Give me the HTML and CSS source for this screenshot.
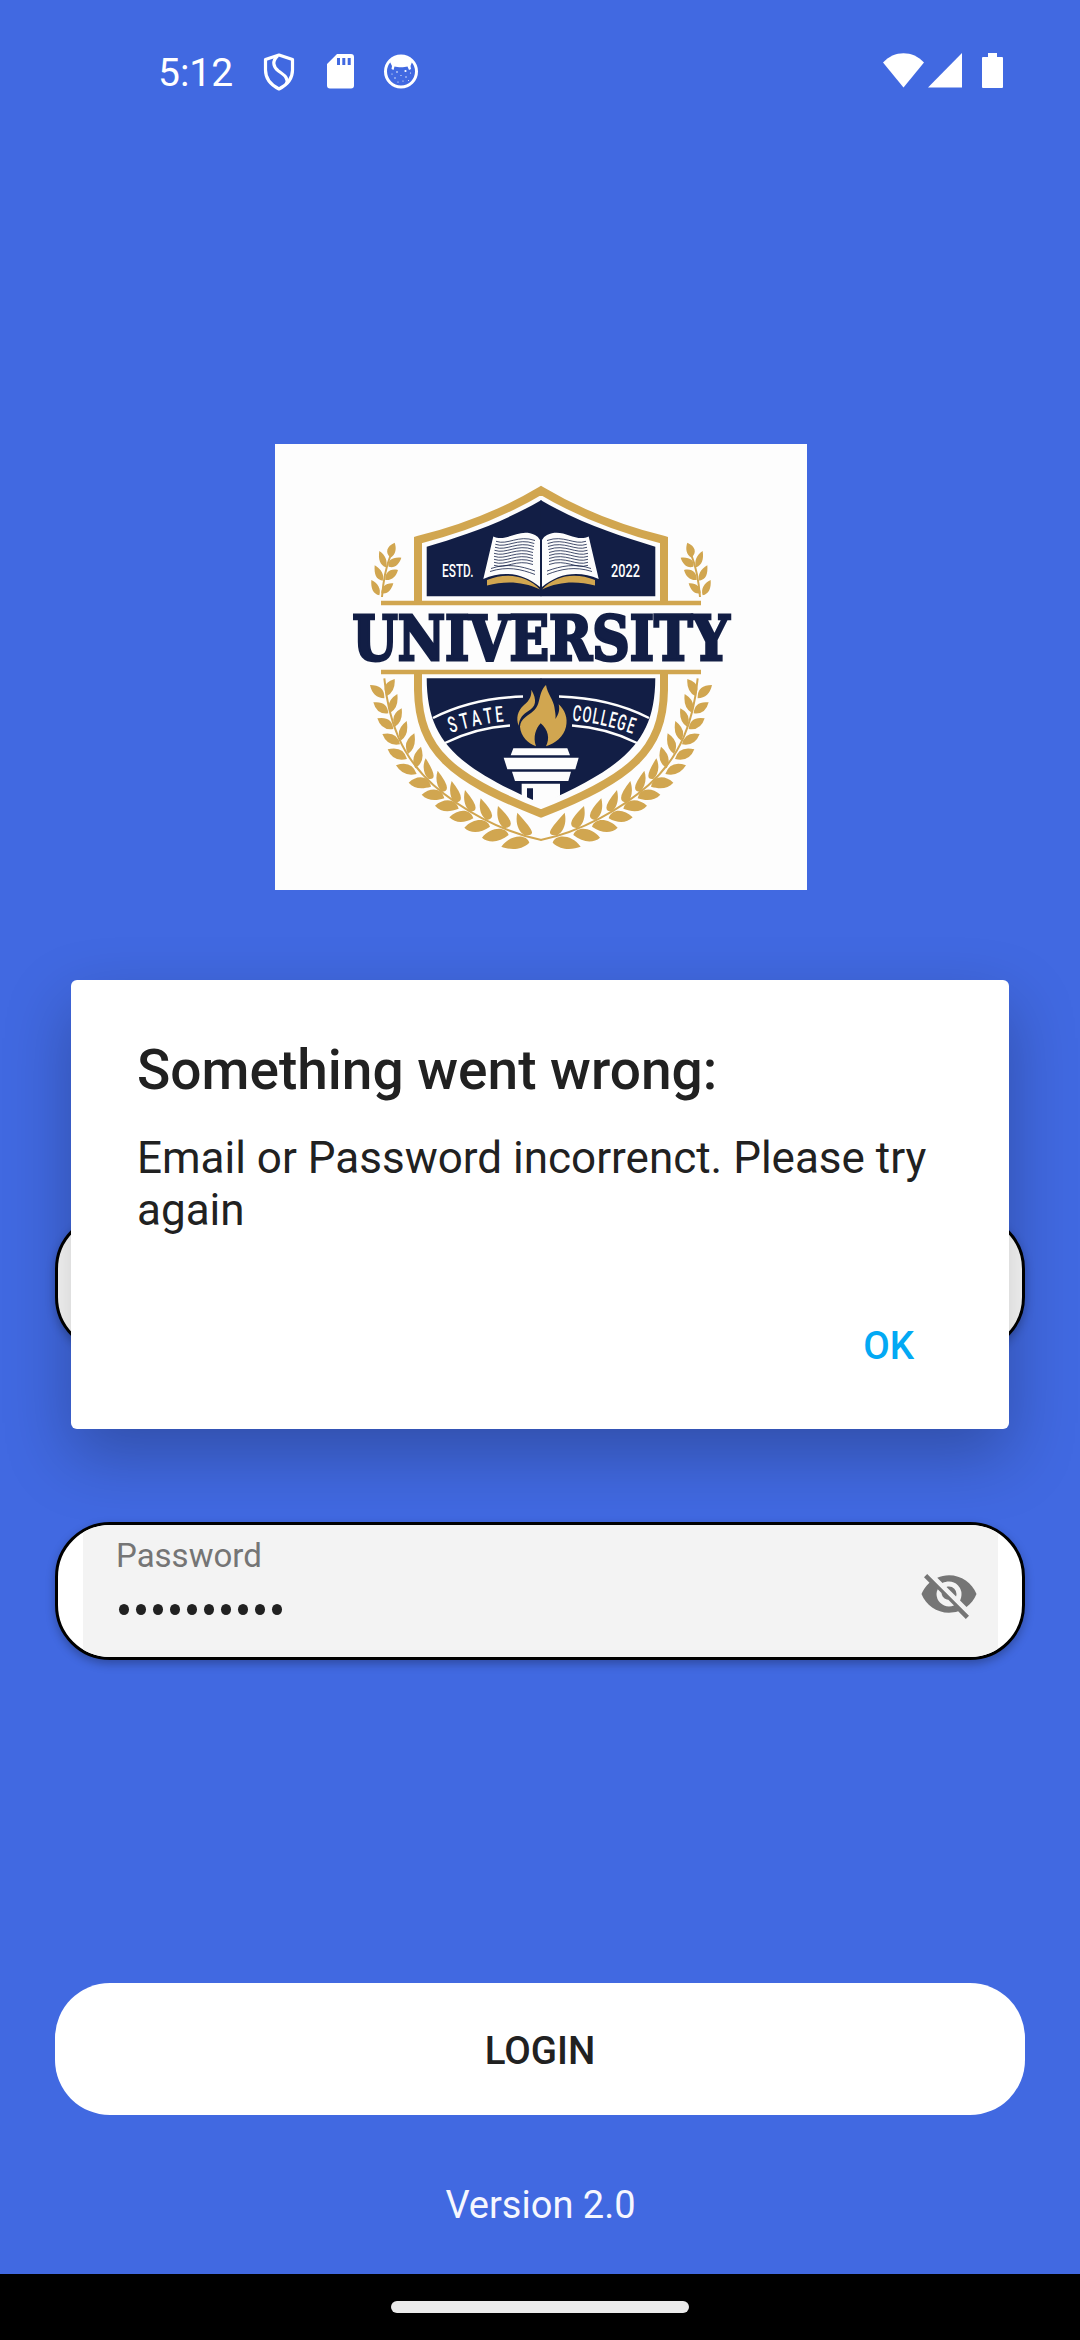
FILE: index.html
```html
<!DOCTYPE html>
<html lang="en">
<head>
<meta charset="utf-8">
<title>Login</title>
<link rel="stylesheet" href="styles.css">
</head>
<body>
<header class="status">
  <span class="clock">5:12</span>
  <svg class="ic-shield" width="32" height="38" viewBox="0 0 32 38" fill="none" stroke="#fff" stroke-width="3.2" stroke-linejoin="round"><path d="M16 2 L29.5 6.5 V17 C29.5 26 23 32.500 16 36 C9 32.500 2.500 26 2.500 17 V6.500Z"/><path d="M14.500 3 C9 8 10 14 15.500 18 C22 22.500 25.500 25 23.500 31"/></svg>
  <svg class="ic-card" width="27" height="35" viewBox="0 0 27 35"><path fill="#fff" fill-rule="evenodd" d="M10 0H24Q27 0 27 3V31.500Q27 34.500 24 34.500H3Q0 34.500 0 31.500V10ZM10 4V11H13V4ZM15.300 4V11H18.300V4ZM20.700 4V11H23.700V4Z"/></svg>
  <svg class="ic-face" width="34" height="35" viewBox="0 0 34 35"><circle cx="17" cy="17.500" r="15.500" fill="none" stroke="#fff" stroke-width="3"/><path fill="#fff" d="M6 8C11 1 23 1 28 8L26.500 12 27 15 25 16 23.500 12.500C20 13.500 14 13.500 10.500 12.500L9.500 16 7.500 15 8 12Z"/><g fill="#fff"><circle cx="13" cy="18" r=".8"/><circle cx="21.500" cy="17" r="1.100"/><circle cx="8" cy="20" r=".6"/><circle cx="17" cy="21.500" r=".6"/><circle cx="11" cy="24" r=".7"/><circle cx="22" cy="23" r=".7"/><circle cx="26.500" cy="19" r=".6"/><circle cx="14" cy="28" r=".6"/><circle cx="19" cy="27" r=".6"/><circle cx="24.500" cy="26.500" r=".5"/></g></svg>
  <span class="spacer"></span>
  <svg class="ic-wifi" width="41" height="35" viewBox="0 0 41 35"><path fill="#fff" d="M0 9.500C11-3 30-3 41 9.500L20.500 34.500Z"/></svg>
  <svg class="ic-signal" width="34" height="35" viewBox="0 0 34 35"><path fill="#fff" d="M34 0V34.500H0Z"/></svg>
  <svg class="ic-battery" width="21" height="35" viewBox="0 0 21 35"><path fill="#fff" d="M6 0H15V4H20Q21 4 21 5V34Q21 35 20 35H1Q0 35 0 34V5Q0 4 1 4H6Z"/></svg>
</header>

<main class="login">
  <svg class="logo" viewBox="275 444 532 446" width="532" height="446">
    <defs>
      <g id="half">
        <path class="navy" d="M541.500 500C500 524 462 536 426.700 546.700V596.300H541.500ZM541.500 678.300H426.700C427 740 455 766 541.500 804Z"/>
        <path class="white-line" d="M433 718C460 704 492 697.500 523 696.500M445 743C465 733 488 727 510 725.500"/>
        <!-- open book page -->
        <path class="white" d="M493.300 536.500C507 543 519 527 535 535Q539 537 540 540V587C524 573 503 570 483.300 579Z"/>
        <path class="gold" d="M487 580C506 572 527 575 540 589.500C522 581 505 581 487 585.500Z"/>
        <g class="page-lines">
          <path id="rule" d="M496 541.300C508 545.500 518 534.500 535 540.500"/>
          <use href="#rule" x="-.7" y="3"/><use href="#rule" x="-1" y="6"/><use href="#rule" x="-1.500" y="9"/><use href="#rule" x="-2" y="12"/><use href="#rule" x="-2" y="15"/><use href="#rule" y="18" x="-2"/><use href="#rule" y="21" x="-2"/><use href="#rule" y="24" x="-2"/>
          <path d="M491 568.500C507 563 521 566 535 571M490 571.500C507 566 521 569 535 574.500"/>
        </g>
        <g class="gold" transform="translate(270 440) scale(.33333)">
          <path d="M374 308C350 318 344 338 362 353C378 342 380 325 374 308ZM328 333C324 358 330 376 348 382C354 362 346 345 328 333ZM394 353C368 350 350 362 356 380C374 386 388 372 394 353ZM314 376C312 402 318 420 338 422C344 404 334 388 314 376ZM384 390C360 384 344 398 346 420C366 422 378 410 384 390ZM304 420C302 446 310 462 328 466C334 446 324 430 304 420ZM370 430C348 428 334 440 334 460C354 464 364 450 370 430Z"/>
          <path class="twig" d="M362 345C346 385 340 420 336 471"/>
        </g>
        <!-- laurel branch -->
        <g class="gold" transform="translate(270 660) scale(.33333)">
          <path class="twig" d="M343 55C355 185 395 290 490 375C570 445 690 515 814 540"/>
          <path d="M300 75Q345 75 343 115Q308 113 300 75ZM310 127Q352 122 355 160Q320 165 310 127ZM322 175Q366 168 370 207Q334 213 322 175ZM337 222Q382 213 390 253Q352 260 337 222ZM353 268Q400 257 411 297Q368 307 353 268ZM378 316Q425 300 440 342Q400 352 378 316ZM416 368C440 345 475 345 483 380C455 388 432 386 416 368ZM455 404C480 382 515 382 523 415C495 424 472 422 455 404ZM495 437C520 414 558 414 566 446C536 458 512 456 495 437ZM538 472C564 445 602 446 610 475C582 491 556 490 538 472ZM583 503C610 473 652 472 660 500C632 520 602 522 583 503ZM636 533C662 500 708 498 716 525C688 548 656 550 636 533ZM694 560C722 522 770 522 778 548C750 574 716 568 694 560Z"/>
          <path d="M374 57Q330 70 350 108Q377 95 374 57ZM382 102Q345 125 361 158Q387 145 382 102ZM395 145Q358 165 375 200Q400 185 395 145ZM410 183Q375 210 392 242Q418 225 410 183ZM433 220Q395 245 414 282Q441 263 433 220ZM453 260Q418 290 436 325Q468 305 453 260ZM467 295C455 320 462 345 476 357Q510 362 467 295ZM503 332C495 355 500 380 515 395Q552 395 503 332ZM545 363C536 390 540 415 555 428Q595 425 545 363ZM585 390C578 418 585 442 600 455Q640 455 585 390ZM632 415C625 445 632 468 650 480Q690 475 632 415ZM684 438C678 468 685 492 703 505Q750 500 684 438ZM742 458C735 488 745 515 763 525C805 530 785 505 742 458Z"/>
        </g>
      </g>
    </defs>
    <rect class="paper" x="275" y="444" width="532" height="446"/>
    <path class="gold-line" d="M418 601V540C462 529 505 512 541 490.500C577 512 620 529 664 540V601M418 674V690C419 750 450 778 541 813.500C632 778 663 750 664 690V674"/>
    <path class="gold-thin" d="M381 602.900H701M381 672.100H701"/>
    <use href="#half"/>
    <use href="#half" transform="translate(1082 0) scale(-1 1)"/>
    <g transform="translate(500 675) scale(.33333)">
      <path class="gold" d="M94 44C112 75 108 95 85 108C70 118 58 128 56 152C48 130 52 108 72 90C90 75 95 62 94 44ZM138 30C142 55 160 75 163 95C166 115 168 122 166 132C176 118 180 105 176 88C195 105 204 130 198 155C192 185 165 205 138 214C150 190 145 165 122 145C108 160 98 185 108 214C85 205 62 185 60 155C62 130 85 122 100 108C125 88 112 55 138 30Z"/>
      <path class="white" d="M40 220H202L210 241H32ZM11 248H236L226 283H22ZM36 290H213L205 318H45ZM65 326H180V362L123 392L65 362Z"/>
      <path class="navy" d="M81 340H99V375L81 367Z"/>
    </g>
    <text class="word" x="352.500" y="659.500" textLength="377" lengthAdjust="spacingAndGlyphs">UNIVERSITY</text>
    <text class="small" x="442" y="576.500" textLength="31.500" lengthAdjust="spacingAndGlyphs">ESTD.</text>
    <text class="small" x="611" y="576.500" textLength="29" lengthAdjust="spacingAndGlyphs">2022</text>
    <g class="arc">
      <text transform="translate(450.500 733) rotate(-17) scale(.64 1)">S</text>
      <text transform="translate(462 729.500) rotate(-14) scale(.64 1)">T</text>
      <text transform="translate(473 726.500) rotate(-12) scale(.64 1)">A</text>
      <text transform="translate(485 724) rotate(-9) scale(.64 1)">T</text>
      <text transform="translate(496 722.300) rotate(-6) scale(.64 1)">E</text>
      <text transform="translate(572 720.500) rotate(6) scale(.6 1)">C</text>
      <text transform="translate(581.500 721.500) rotate(8) scale(.6 1)">O</text>
      <text transform="translate(591.500 723) rotate(10) scale(.6 1)">L</text>
      <text transform="translate(599.500 724.700) rotate(12) scale(.6 1)">L</text>
      <text transform="translate(607.500 726.500) rotate(14) scale(.6 1)">E</text>
      <text transform="translate(615.500 728.500) rotate(16) scale(.6 1)">G</text>
      <text transform="translate(625.500 731.500) rotate(18) scale(.6 1)">E</text>
    </g>
  </svg>

  <div class="field email"></div>
  <div class="field password">
    <div class="fill">
      <div class="texts">
        <label class="label">Password</label>
        <span class="dots"><i></i><i></i><i></i><i></i><i></i><i></i><i></i><i></i><i></i><i></i></span>
      </div>
      <svg class="eye" width="60" height="60" viewBox="0 0 24 24"><path fill="#757575" d="M2 5.270 3.280 4 20 20.720 18.730 22 15.650 18.920C14.500 19.300 13.280 19.500 12 19.500 7 19.500 2.730 16.390 1 12 1.690 10.240 2.790 8.690 4.190 7.460L2 5.270M12 9A3 3 0 0 1 15 12C15 12.350 14.940 12.690 14.830 13L11 9.170C11.310 9.060 11.650 9 12 9M12 4.500C17 4.500 21.270 7.610 23 12 22.180 14.080 20.790 15.880 19 17.190L16.420 14.600C16.790 13.820 17 12.940 17 12A5 5 0 0 0 12 7C11.060 7 10.180 7.210 9.400 7.580L7.300 5.470C8.740 4.850 10.330 4.500 12 4.500M7 12A5 5 0 0 0 12 17C12.690 17 13.370 16.860 14 16.590L11.720 14.290C10.290 14.140 9.140 13 9 11.570L7.500 10.060C7.180 10.650 7 11.310 7 12Z"/></svg>
    </div>
  </div>
  <button class="submit">LOGIN</button>
  <p class="version">Version 2.0</p>
</main>

<footer class="navbar"><span class="handle"></span></footer>

<section class="dialog">
  <h1 class="title">Something went wrong:</h1>
  <p class="message">Email or Password incorrenct. Please try again</p>
  <button class="ok">OK</button>
</section>
</body>
</html>
```
FILE: styles.css
```css
* { box-sizing: border-box; }
body {
  margin: 0;
  width: 1080px;
  height: 2340px;
  display: flex;
  flex-direction: column;
  position: relative;
  overflow: hidden;
  background: #4169e1;
  font-family: Roboto, "Liberation Sans", sans-serif;
  color: #212121;
}
svg { display: block; flex: none; }
button { border: 0; padding: 0; background: none; font-family: inherit; color: inherit; }

.status {
  height: 144px;
  padding: 53px 77px 0 158px;
  display: flex;
  align-items: flex-start;
  color: #fff;
}
.clock { width: 105px; font-size: 39px; line-height: 40px; }
.ic-card { margin: 1px 0 0 32px; }
.ic-face { margin: 1px 0 0 30px; }
.spacer { flex: 1; }
.ic-signal { margin-left: 4px; }
.ic-battery { margin-left: 20px; }

.login {
  flex: 1;
  padding: 300px 55px 0;
  display: flex;
  flex-direction: column;
}
.logo { margin-left: 220px; }
.paper { fill: #fdfdfd; }
.navy { fill: #121e45; }
.gold { fill: #d1a650; }
.white { fill: #fdfdfd; }
.gold-line { fill: none; stroke: #d1a650; stroke-width: 8; }
.gold-thin { fill: none; stroke: #d1a650; stroke-width: 4.500; }
.white-line { fill: none; stroke: #fdfdfd; stroke-width: 2.500; }
.page-lines { fill: none; stroke: #121e45; stroke-width: .8; }
.twig { fill: none; stroke: #d1a650; stroke-width: 6; }
.word {
  font: bold 61px "DejaVu Serif", serif;
  fill: #121e45;
  stroke: #121e45;
  stroke-width: 3;
}
.small { font: 500 19px Roboto, sans-serif; fill: #fdfdfd; }
.arc { font: 500 22px Roboto, sans-serif; fill: #fdfdfd; }

.field {
  height: 138px;
  border: 3px solid #000;
  border-radius: 55px;
  background: #fff;
  overflow: hidden;
  box-shadow: 0 4px 10px rgba(0, 0, 0, .28);
}
.email { margin-top: 324px; }
.password { margin-top: 170px; padding: 0 24px 0 25px; }
.fill {
  height: 132px;
  padding: 12px 19px 0 33px;
  display: flex;
  justify-content: space-between;
  background: #f3f3f3;
}
.label { display: block; font-size: 33px; line-height: 38px; color: #757575; }
.dots { display: flex; gap: 7px; margin: 28.500px 0 0 3px; }
.dots i { width: 10px; height: 11px; border-radius: 50%; background: #212121; }
.eye { margin-top: 27px; }

.submit {
  height: 132px;
  margin-top: 323px;
  padding-top: 2px;
  border-radius: 55px;
  background: #fff;
  font-size: 38.500px;
  font-weight: 500;
}
.version {
  margin: 68px 0 0;
  padding-left: 1px;
  text-align: center;
  font-size: 38px;
  line-height: 45px;
  color: #f6f7fe;
}
.navbar {
  height: 66px;
  padding-top: 27px;
  display: flex;
  justify-content: center;
  background: #000;
}
.handle { width: 298px; height: 12px; border-radius: 6px; background: #ebebeb; }

.dialog {
  position: absolute;
  left: 71px;
  top: 980px;
  width: 938px;
  height: 449px;
  padding: 58px 66px 0;
  border-radius: 6px;
  background: #fff;
  box-shadow: 0 26px 66px rgba(0, 0, 0, .25);
  display: flex;
  flex-direction: column;
}
.title { margin: 0; font-size: 55px; line-height: 65px; font-weight: 500; }
.message { margin: 29px 0 0; font-size: 44px; line-height: 52px; }
.ok {
  align-self: flex-end;
  margin: 87px 29px 0 0;
  font-size: 38.500px;
  line-height: 45px;
  font-weight: 500;
  color: #03a9f4;
}
```
